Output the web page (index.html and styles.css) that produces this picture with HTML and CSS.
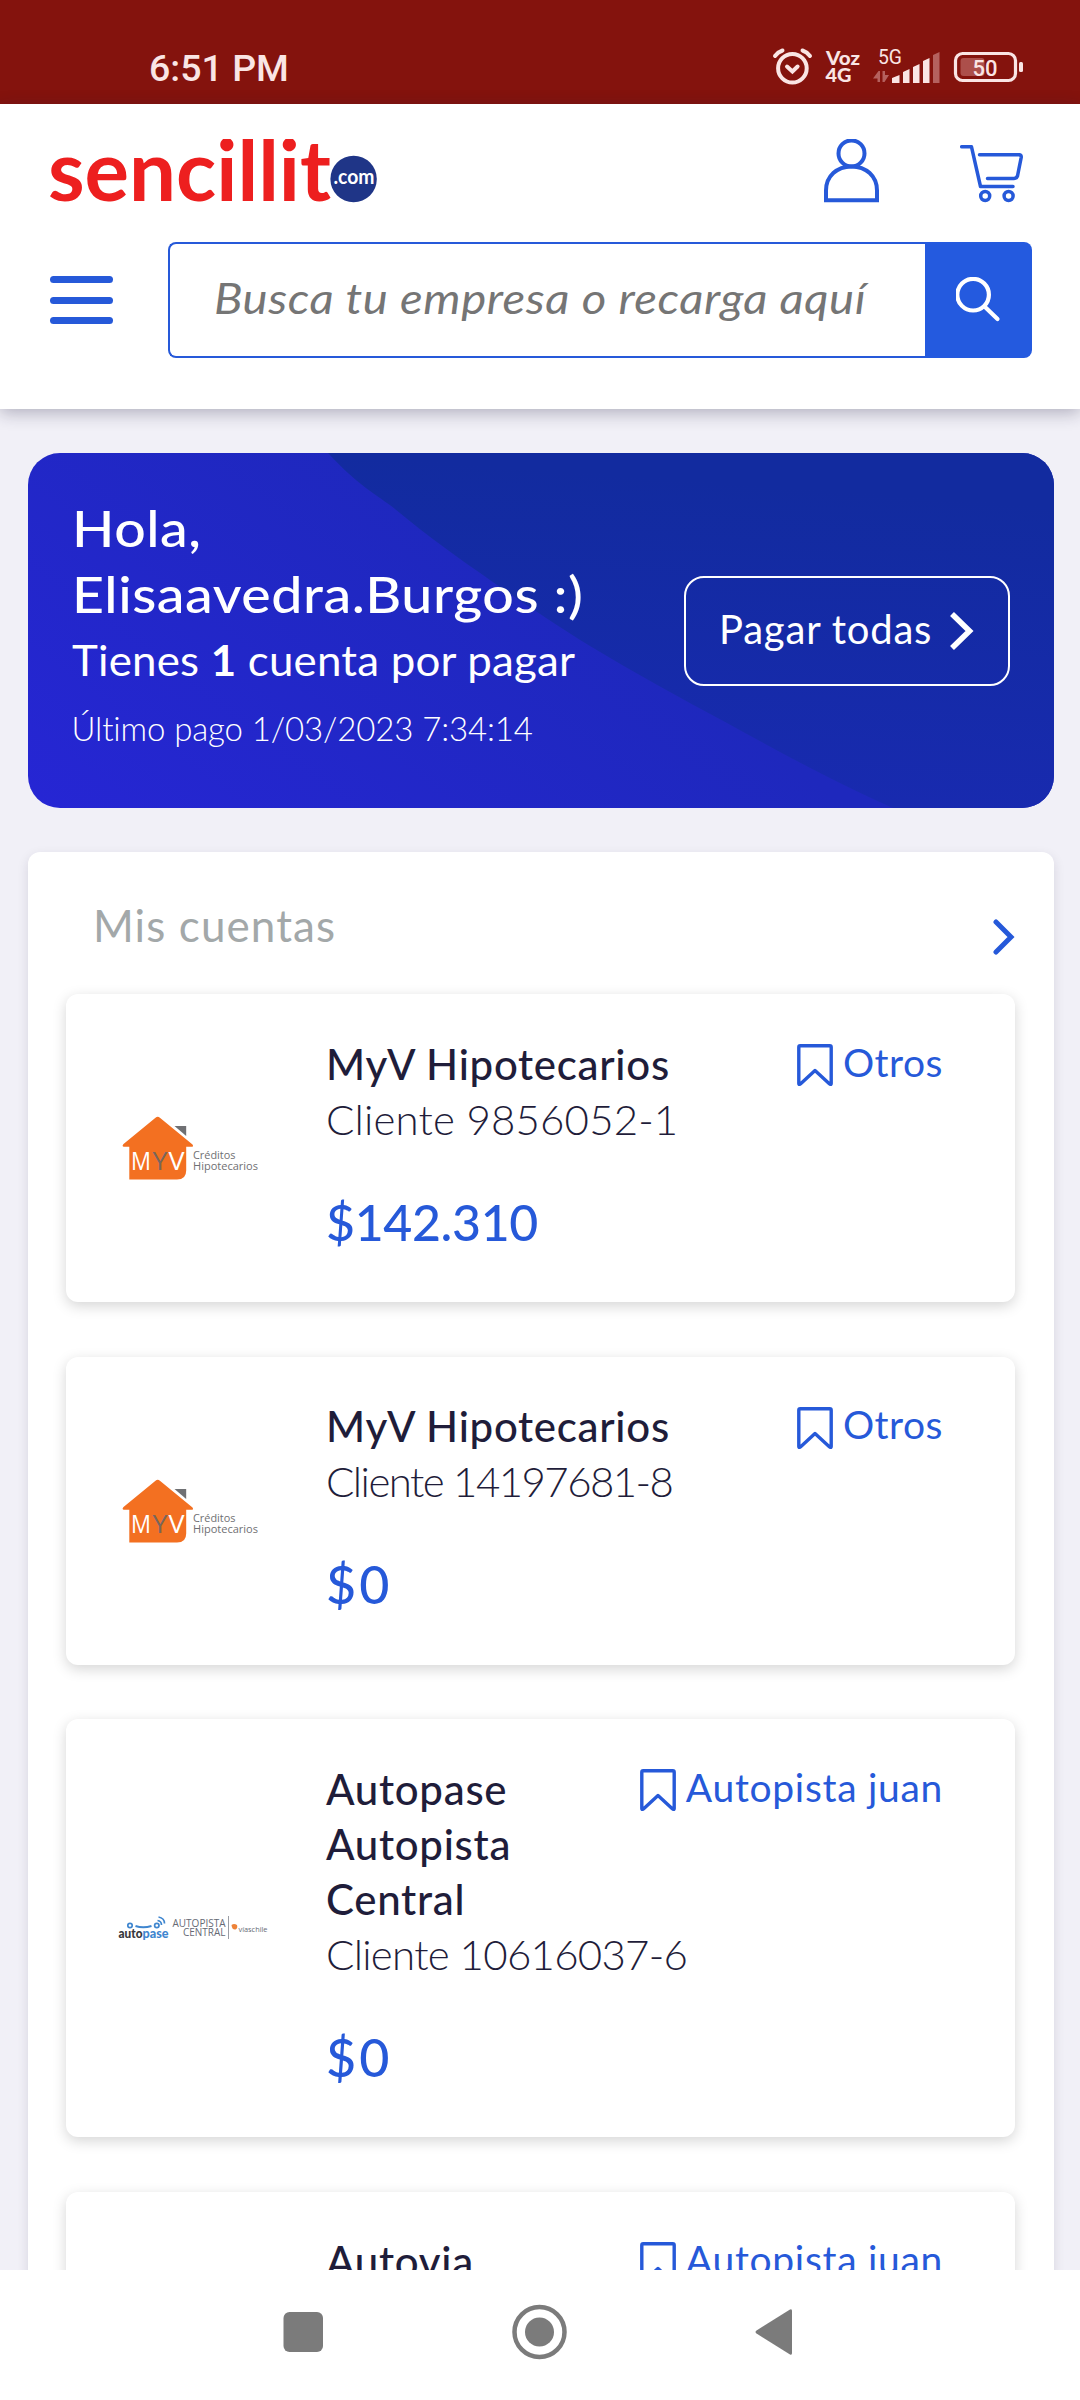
FILE: index.html
```html
<!DOCTYPE html>
<html lang="es">
<head>
<meta charset="utf-8">
<title>Sencillito</title>
<link rel="stylesheet" href="styles.css">
</head>
<body>
<svg class="defs" width="0" height="0" aria-hidden="true">
  <symbol id="bookmark" viewBox="0 0 36 42"><path d="M3.2 1.8H32.8Q34.2 1.8 34.2 3.2V39.6Q34.2 41.2 32.6 40L18 26.5L3.4 40Q1.8 41.2 1.8 39.6V3.2Q1.8 1.8 3.2 1.8Z" fill="none" stroke="#2659d9" stroke-width="3.4" stroke-linejoin="round"/></symbol>
  <symbol id="myv" viewBox="0 0 137 64">
    <path d="M33.500 1.700Q35.700 0 37.900 1.700L70.500 28.500Q72 30.800 70 30.800H64.200V54.500Q64.200 63.600 55 63.600H7.300V30.800H2Q-.5 30.500 1.500 28Z" fill="#f37021"/>
    <path d="M52.500 10H64.200V20Z" fill="#6f7073"/>
    <g font-family="Open Sans, sans-serif">
      <text x="9" y="53.700" font-size="25" fill="#fff" textLength="20" lengthAdjust="spacingAndGlyphs">M</text>
      <text x="30.500" y="53.700" font-size="25" fill="#77665d" textLength="15" lengthAdjust="spacingAndGlyphs">Y</text>
      <text x="46.500" y="53.700" font-size="25" fill="#fff" textLength="16" lengthAdjust="spacingAndGlyphs">V</text>
      <text x="71" y="43" font-size="11.500" fill="#6f7073" textLength="42.500" lengthAdjust="spacingAndGlyphs">Créditos</text>
      <text x="71" y="54" font-size="11.500" fill="#6f7073" textLength="65" lengthAdjust="spacingAndGlyphs">Hipotecarios</text>
    </g>
  </symbol>
</svg>

<div class="status">
  <span class="clock">6:51 PM</span>
  <svg width="252" height="40" viewBox="772 46 252 40">
    <g fill="none" stroke="#fae5e4" stroke-width="4" stroke-linecap="round">
      <circle cx="792.400" cy="68.200" r="14.300"/>
      <path d="M787 66.500L792.400 71.500L797.600 66.500"/>
      <path d="M775 56Q778 52 782.500 50.500M810 56Q807 52 802.500 50.500"/>
    </g>
    <g fill="#fae5e4">
      <text x="826" y="65" font-family="Lato" font-weight="900" font-size="18" textLength="34" lengthAdjust="spacingAndGlyphs">Voz</text>
      <text x="825.500" y="82" font-family="Lato" font-weight="900" font-size="18" textLength="26" lengthAdjust="spacingAndGlyphs">4G</text>
      <text x="878" y="64" font-family="Roboto" font-size="20" textLength="24" lengthAdjust="spacingAndGlyphs">5G</text>
      <path d="M892 83V78L899.500 75V83ZM903 83V72L909.500 69V83ZM913 83V67L919.500 64V83ZM923 83V61L929.500 58V83Z"/>
    </g>
    <path d="M933 83V55L939.500 52V83ZM873 78.500L878.500 71H880V82H877.500V78.500ZM882.500 71H885V75H889L884.500 82H882.500Z" fill="#b5615e"/>
    <rect x="955.500" y="53.500" width="60" height="27" rx="7" fill="none" stroke="#fae5e4" stroke-width="3.200"/>
    <rect x="1019" y="62" width="4" height="10" rx="1.500" fill="#fae5e4"/>
    <rect x="960.500" y="58" width="24" height="18" rx="3" fill="#ac4f4b"/>
    <text x="972.500" y="76" font-family="Roboto" font-weight="500" font-size="22.500" fill="#fae5e4" textLength="25" lengthAdjust="spacingAndGlyphs">50</text>
  </svg>
</div>

<header class="header">
  <div class="brand-row">
    <svg class="logo" width="330" height="64" viewBox="50 139 330 64">
      <text x="48" y="201" font-family="Lato" font-weight="700" font-size="84" fill="#ed1f1f" textLength="283" lengthAdjust="spacingAndGlyphs">sencillit</text>
      <circle cx="353.600" cy="179" r="23.200" fill="#1f3587"/>
      <text x="333.500" y="184" font-family="Lato" font-weight="700" font-size="21" fill="#fff" textLength="41" lengthAdjust="spacingAndGlyphs">.com</text>
    </svg>
    <svg class="user" width="56" height="64" viewBox="824 139 56 64" fill="none" stroke="#2659d9" stroke-width="4">
      <circle cx="851.500" cy="153.400" r="13"/>
      <path d="M826 200.300V190.500C826 176 837 166.400 851.500 166.400S877 176 877 190.500V200.300Z"/>
    </svg>
    <svg class="cart" width="64" height="64" viewBox="960 139 64 64" fill="none" stroke="#2659d9" stroke-width="3.500" stroke-linecap="round" stroke-linejoin="round">
      <path d="M961.700 146.800H971.500L980.500 186.500H1013M979.500 154.800H1019.500Q1021.500 155.300 1021.200 157.500L1017.500 176Q1016.500 178.500 1014 178.500H987.500"/>
      <circle cx="985.200" cy="196" r="4.500"/><circle cx="1008.600" cy="196" r="4.500"/>
    </svg>
  </div>
  <div class="search-row">
    <div class="menu"><i></i><i></i><i></i></div>
    <div class="search">
      <div class="field"><span>Busca tu empresa o recarga aquí</span></div>
      <div class="go"><svg width="46" height="46" viewBox="956.500 277 46 46" fill="none" stroke="#fff" stroke-width="4.200" stroke-linecap="round"><circle cx="973.600" cy="294.700" r="15.800"/><path d="M985 306.500L998 319"/></svg></div>
    </div>
  </div>
</header>

<main class="page">
  <section class="hero">
    <svg class="swoosh" width="1026" height="355" viewBox="28 453 1026 355" preserveAspectRatio="none">
      <defs><linearGradient id="g" x1="0" y1="0" x2="-0.150" y2="1"><stop offset="0" stop-color="#122b9f"/><stop offset="1" stop-color="#192ab2"/></linearGradient></defs>
      <path d="M328 453C360 488 385 500 395 509C430 538 460 559 490 580C520 601 553 623 590 646C635 673 680 698 727 723C780 752 830 780 893 808H1054V453Z" fill="url(#g)"/>
    </svg>
    <div class="hello">
      <h1 class="greet">Hola,<br>Elisaavedra.Burgos :)</h1>
      <p class="due">Tienes <b>1</b> cuenta por pagar</p>
      <p class="last">Último pago 1/03/2023 7:34:14</p>
    </div>
    <div class="pay"><span>Pagar todas</span><svg width="24" height="38" viewBox="0 0 24 38" fill="none" stroke="#fff" stroke-width="5.600"><path d="M2 2L19.500 19L2 36"/></svg></div>
  </section>

  <section class="panel">
    <div class="panel-head">
      <h2>Mis cuentas</h2>
      <svg width="22" height="36" viewBox="0 0 22 36" fill="none" stroke="#2659d9" stroke-width="5" stroke-linecap="round"><path d="M3 3L18 18L3 33"/></svg>
    </div>

    <article class="card">
      <div class="mark"><svg class="myv" width="137" height="64"><use href="#myv"/></svg></div>
      <div class="info">
        <div class="top"><h3>MyV Hipotecarios</h3><div class="tag"><svg width="36" height="42"><use href="#bookmark"/></svg><span>Otros</span></div></div>
        <p class="client">Cliente 9856052-1</p>
        <p class="amount">$142.310</p>
      </div>
    </article>

    <article class="card">
      <div class="mark"><svg class="myv" width="137" height="64"><use href="#myv"/></svg></div>
      <div class="info">
        <div class="top"><h3>MyV Hipotecarios</h3><div class="tag"><svg width="36" height="42"><use href="#bookmark"/></svg><span>Otros</span></div></div>
        <p class="client client-tighter">Cliente 14197681-8</p>
        <p class="amount amount-zero">$0</p>
      </div>
    </article>

    <article class="card">
      <div class="mark"><svg class="autopase" width="151" height="26" viewBox="118 1916 151 26">
        <g fill="none" stroke="#3f86cf" stroke-width="1.700">
          <circle cx="130" cy="1926.500" r="2.200"/><circle cx="156.800" cy="1926.500" r="2.200"/>
          <path d="M135.500 1927Q143 1929.500 151.500 1927" stroke-width="2"/>
          <path d="M157.500 1921.500Q161.500 1922 161.500 1926M158.500 1918Q164.500 1919 164.500 1924.500"/>
        </g>
        <text x="118.500" y="1939" font-family="Lato" font-weight="900" font-size="13" fill="#36373b" textLength="24" lengthAdjust="spacingAndGlyphs">auto</text>
        <text x="142.500" y="1939" font-family="Lato" font-weight="900" font-size="13" fill="#3f86cf" textLength="26" lengthAdjust="spacingAndGlyphs">pase</text>
        <g font-family="Open Sans, sans-serif" fill="#666a75">
          <text x="172.500" y="1928" font-size="10" textLength="53" lengthAdjust="spacingAndGlyphs">AUTOPISTA</text>
          <text x="183" y="1937" font-size="10" textLength="42.500" lengthAdjust="spacingAndGlyphs">CENTRAL</text>
          <text x="238.500" y="1932.600" font-size="8" textLength="29" lengthAdjust="spacingAndGlyphs">víaschile</text>
        </g>
        <path d="M228.500 1917V1940" stroke="#9a9da5" stroke-width="1"/>
        <path d="M231.500 1926Q234 1924 237 1926Q238 1929 235.500 1930.500Q232 1931 231.500 1926Z" fill="#ee8338"/>
      </svg></div>
      <div class="info">
        <div class="top"><h3>Autopase Autopista Central</h3><div class="tag tag-long"><svg width="36" height="42"><use href="#bookmark"/></svg><span>Autopista juan</span></div></div>
        <p class="client client-tight">Cliente 10616037-6</p>
        <p class="amount amount-zero">$0</p>
      </div>
    </article>

    <article class="card">
      <div class="mark"></div>
      <div class="info">
        <div class="top"><h3>Autovia</h3><div class="tag tag-long"><svg width="36" height="42"><use href="#bookmark"/></svg><span>Autopista juan</span></div></div>
      </div>
    </article>
  </section>
</main>

<nav class="nav">
  <svg width="1080" height="130" viewBox="0 2270 1080 130" fill="#7b7b7b">
    <rect x="283.500" y="2312" width="39.500" height="40" rx="6"/>
    <circle cx="539.500" cy="2332" r="25" fill="none" stroke="#7b7b7b" stroke-width="4.500"/><circle cx="539.500" cy="2332" r="14.500"/>
    <path d="M790 2309.500Q792 2308.500 792 2311V2353Q792 2355.500 790 2354.500L756.500 2333.500Q754.500 2332 756.500 2330.500Z"/>
  </svg>
</nav>
</body>
</html>
```
FILE: styles.css
```css
* { box-sizing: border-box; }
body { margin: 0; width: 1080px; height: 2400px; overflow: hidden; display: flex; flex-direction: column; background: #f1f0f7; font-family: Lato, "Open Sans", sans-serif; color: #1f1d3a; }
h1, h2, h3, p { margin: 0; font-weight: 400; }
svg { display: block; flex: none; }
.defs { position: absolute; }

.status { flex: none; height: 104px; padding: 46px 56px 0 149px; display: flex; justify-content: space-between; background: #84130d; }
.clock { font: 500 37.500px/45px Roboto, sans-serif; color: #fae5e4; }

.header { flex: none; height: 305px; padding: 35px 48px 0 50px; background: #fff; box-shadow: 0 4px 16px rgba(30, 25, 60, .3); position: relative; }
.brand-row { display: flex; }
.user { margin-left: 444px; }
.cart { margin-left: 80px; }
.search-row { display: flex; align-items: center; justify-content: space-between; margin-top: 39px; }
.menu { display: flex; flex-direction: column; gap: 13.500px; }
.menu i { width: 63px; height: 7px; border-radius: 3.500px; background: #2659d9; }
.search { display: flex; width: 864px; height: 116px; }
.field { flex: 1; padding-left: 44px; border: 2px solid #2659d9; border-right: 0; border-radius: 8px 0 0 8px; font-size: 42px; line-height: 109px; font-style: italic; letter-spacing: .500px; color: #757575; white-space: nowrap; }
.field span { display: inline-block; transform: scaleX(1.127); transform-origin: left; }
.go { width: 107px; display: grid; place-items: center; border-radius: 0 8px 8px 0; background: #245adf; }

.page { flex: 1; min-height: 0; overflow: hidden; padding: 44px 26px 0 28px; }
.hero { position: relative; height: 355px; padding: 42px 44px 0 43.500px; display: flex; justify-content: space-between; border-radius: 32px; overflow: hidden; background: linear-gradient(37deg, #2626d4, #1e28bd 55%); color: #fff; white-space: nowrap; }
.swoosh { position: absolute; inset: 0; }
.hello, .pay { position: relative; }
.greet { font-size: 51px; line-height: 66px; font-weight: 500; letter-spacing: .500px; transform: scaleX(1.088); transform-origin: left; }
.due { font-size: 42px; line-height: 66px; letter-spacing: .200px; transform: scaleX(1.044); transform-origin: left; }
.last { margin-top: 10px; font-size: 33px; line-height: 50px; font-weight: 300; letter-spacing: -.120px; }
.pay { width: 326px; height: 110px; margin-top: 81px; padding: 0 34px 0 33px; display: flex; align-items: center; justify-content: space-between; border: 2px solid #fff; border-radius: 20px; font-size: 40px; letter-spacing: .800px; }
.pay span { padding-bottom: 4px; }

.panel { margin-top: 44px; padding: 0 39px 0 38px; border-radius: 12px; background: #fff; box-shadow: 0 4px 12px rgba(30, 25, 60, .12); }
.panel-head { height: 142px; padding: 43px 0 0 27px; display: flex; justify-content: space-between; }
.panel-head h2 { font-size: 44px; line-height: 60px; letter-spacing: 1.100px; color: #a3a8a9; }
.panel-head svg { margin-top: 24px; }
.card { display: flex; margin-bottom: 54.600px; padding: 42.500px 73px 49.500px 0; border-radius: 12px; background: #fff; box-shadow: 0 4px 14px rgba(0, 0, 0, .17); }
.mark { width: 260px; display: flex; align-items: center; }
.myv { margin: 7px 0 0 56px; }
.autopase { margin: 7px 0 0 52px; }
.info { flex: 1; min-width: 0; }
.top { display: flex; justify-content: space-between; align-items: flex-start; }
.top h3 { font-size: 42px; line-height: 55px; font-weight: 500; letter-spacing: .700px; }
.tag { flex: none; display: flex; gap: 10px; font-size: 39px; line-height: 50px; letter-spacing: .500px; color: #2659d9; }
.tag span { margin-right: -1px; }
.tag-long { letter-spacing: .700px; }
.tag svg { margin-top: 7.500px; }
.client { font-size: 42px; line-height: 55px; font-weight: 300; letter-spacing: .150px; white-space: nowrap; }
.client-tight { letter-spacing: -.720px; }
.client-tighter { letter-spacing: -1.540px; }
.amount { margin-top: 45px; margin-bottom: 1px; font-size: 50px; line-height: 60px; font-weight: 500; letter-spacing: -.350px; color: #2659d9; }
.amount-zero { font-size: 52px; letter-spacing: 3px; }

.nav { flex: none; height: 130px; background: #fff; position: relative; }
```
